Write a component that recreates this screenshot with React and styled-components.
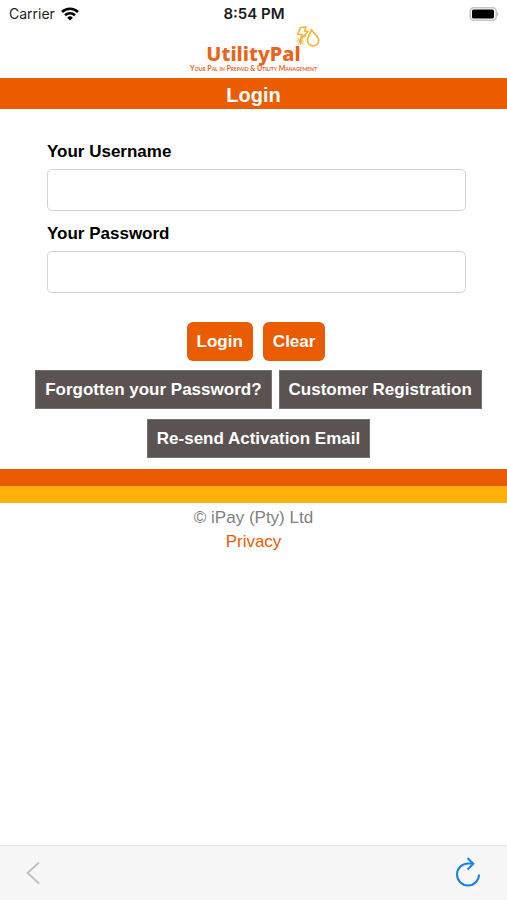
import React, { useState } from 'react'
import styled, { createGlobalStyle } from 'styled-components'

const GlobalStyle = createGlobalStyle`
* {
    box-sizing: border-box;
}
body {
    margin: 0;
    background-color: #ffffff;
    color: #000000;
    font-family: "Liberation Sans", Arial, sans-serif;
    font-size: 17px;
}
`;
const Page = styled.div`
    min-height: 100vh;
    display: flex;
    flex-direction: column;
`;
const StatusBar = styled.div`
    display: grid;
    grid-template-columns: 1fr auto 1fr;
    align-items: center;
    height: 27px;
    padding: 0 8px 0 9px;
    font-family: Inter, sans-serif;
    font-size: 14px;
    color: #1c1c1c;
`;
const Carrier = styled.div`
    display: flex;
    align-items: center;
    gap: 6px;
`;
const Clock = styled.div`
    font-size: 15px;
    font-weight: 600;
`;
const BatteryIcon = styled.svg`
    justify-self: end;
`;
const LogoArea = styled.div`
    display: flex;
    flex-direction: column;
    align-items: center;
    height: 51px;
    padding-top: 17px;
    color: #e8641b;
`;
const LogoName = styled.div`
    position: relative;
    font-family: "Noto Sans", sans-serif;
    font-size: 20px;
    font-weight: 800;
    line-height: 20px;
`;
const LogoMark = styled.svg`
    position: absolute;
    right: -19px;
    bottom: 16px;
`;
const Tagline = styled.div`
    margin-top: 1px;
    font-family: Lato, sans-serif;
    font-size: 7px;
    font-weight: 700;
    font-variant: small-caps;
    line-height: 6px;
`;
const Title = styled.h1`
    margin: 0;
    padding-top: 3px;
    background-color: #eb5c00;
    color: #ffffff;
    font-size: 20px;
    line-height: 28px;
    text-align: center;
`;
const Form = styled.form`
    padding: 31px 0 11px;
`;
const Field = styled.div`
    display: flex;
    flex-direction: column;
    padding: 0 41px 0 47px;
    margin-bottom: 11px;
`;
const Label = styled.label`
    font-weight: 700;
    line-height: 24px;
    margin-bottom: 5px;
`;
const Input = styled.input`
    width: 100%;
    height: 42px;
    padding: 8px 12px;
    border: 1px solid #d3d3d3;
    border-radius: 5px;
    font: inherit;
`;
const BtnRow = styled.div`
    display: flex;
    flex-wrap: wrap;
    justify-content: center;
    gap: 10px ${props=>props.$gap};
    margin-top: ${props=>props.$top};
    padding-left: ${props=>props.$indent};
`;
const Btn = styled.button`
    height: 39px;
    padding: 0 10px;
    border: none;
    border-radius: 6px;
    background-color: #eb5c00;
    color: #ffffff;
    font: inherit;
    font-weight: 700;
    cursor: pointer;
`;
const DarkBtn = styled(Btn)`
    border: 1px solid #77706f;
    border-radius: 0;
    background-color: #5a5352;
    padding: 0 9px;
`;
const Stripe = styled.div`
    height: 17px;
    background-color: ${props=>props.$color};
`;
const Footer = styled.footer`
    flex: 1;
    padding-top: 3px;
    text-align: center;
    line-height: 24px;
    color: #808080;
`;
const PrivacyLink = styled.a`
    color: #eb5c00;
    text-decoration: none;
`;
const Toolbar = styled.nav`
    display: flex;
    align-items: center;
    justify-content: space-between;
    height: 55px;
    padding: 0 24px;
    border-top: 1px solid #e4e4e4;
    background-color: #f7f7f7;
`;
const IconBtn = styled.button`
    display: flex;
    padding: 0;
    border: none;
    background: none;
    cursor: pointer;
`;

function Logo() {
    return (
    <LogoArea>
        <LogoName>
            UtilityPal
            <LogoMark width="24" height="22" viewBox="0 0 24 22" fill="none" stroke="#f9b233" strokeWidth="1.6" strokeLinejoin="round" strokeLinecap="round">
                <path d="M4.5 1.5 L10 1 L8.5 5 L12 5.5 L5 12.5 L6 8.5 L1.5 8.5 Z" />
                <path d="M15.5 3.5 C14.5 8 11.5 10 11.5 14.3 A5.6 5.6 0 0 0 22.7 14.3 C22.7 10 17.5 8 15.5 3.5 Z" />
                <path d="M1 15 H7.5 M2 12.5 L7 18 M4.5 13 V18.5 M7 12.5 L2 18 M8.5 11 L10 9.5" strokeWidth="1.1" />
            </LogoMark>
        </LogoName>
        <Tagline>Your Pal in Prepaid &amp; Utility Management</Tagline>
    </LogoArea>
    )
}

function PhoneStatus() {
    return (
    <StatusBar>
        <Carrier>
            Carrier
            <svg width="18" height="14" viewBox="0 0 18 14" fill="none" stroke="#000000" strokeWidth="2.6">
                <path d="M1 5 A11.4 11.4 0 0 1 17 5" />
                <path d="M4 8.3 A7.2 7.2 0 0 1 14 8.3" />
                <path d="M6.2 10.7 A4 4 0 0 1 11.8 10.7 L9 13.6 Z" fill="#000000" stroke="none" />
            </svg>
        </Carrier>
        <Clock>8:54 PM</Clock>
        <BatteryIcon width="30" height="14" viewBox="0 0 30 14">
            <rect x="1.2" y="0.8" width="26" height="12.4" rx="3.5" fill="#ffffff" stroke="#c4c4c4" strokeWidth="1.6" />
            <rect x="3" y="2.6" width="22" height="8.8" rx="1.5" fill="#000000" />
            <path d="M28.2 5 C29.8 5.4 29.8 8.6 28.2 9 Z" fill="#bdbdbd" />
        </BatteryIcon>
    </StatusBar>
    )
}

export default function App() {
    const [username, setUsername] = useState('');
    const [password, setPassword] = useState('');
    const clear = () => {
        setUsername('');
        setPassword('');
    }
    return (
    <Page>
        <GlobalStyle />
        <PhoneStatus />
        <Logo />
        <Title>Login</Title>
        <Form onSubmit={(e)=>{e.preventDefault()}}>
            <Field>
                <Label htmlFor="username">Your Username</Label>
                <Input id="username" type="text" value={username} onChange={(e)=>{setUsername(e.target.value)}} />
            </Field>
            <Field>
                <Label htmlFor="password">Your Password</Label>
                <Input id="password" type="password" value={password} onChange={(e)=>{setPassword(e.target.value)}} />
            </Field>
            <BtnRow $gap="10px" $top="29px" $indent="5px">
                <Btn type="submit">Login</Btn>
                <Btn type="button" onClick={clear}>Clear</Btn>
            </BtnRow>
            <BtnRow $gap="7px" $top="9px" $indent="10px">
                <DarkBtn type="button">Forgotten your Password?</DarkBtn>
                <DarkBtn type="button">Customer Registration</DarkBtn>
                <DarkBtn type="button">Re-send Activation Email</DarkBtn>
            </BtnRow>
        </Form>
        <Stripe $color="#eb5c00" />
        <Stripe $color="#ffb00a" />
        <Footer>
            <div>© iPay (Pty) Ltd</div>
            <PrivacyLink href="#privacy">Privacy</PrivacyLink>
        </Footer>
        <Toolbar>
            <IconBtn type="button" aria-label="Back">
                <svg width="18" height="24" viewBox="0 0 18 24" fill="none" stroke="#bfbfbf" strokeWidth="1.8">
                    <path d="M15 1.5 L3.5 12 L15 22.5" />
                </svg>
            </IconBtn>
            <IconBtn type="button" aria-label="Reload">
                <svg width="30" height="32" viewBox="0 0 30 32" fill="none" stroke="#147efb" strokeWidth="2">
                    <path d="M26 17.5 A11 11 0 1 1 15 6.5 L20 6.5" />
                    <path d="M14.5 1 L20.3 6.8 L14.5 12.6" />
                </svg>
            </IconBtn>
        </Toolbar>
    </Page>
    )
}
